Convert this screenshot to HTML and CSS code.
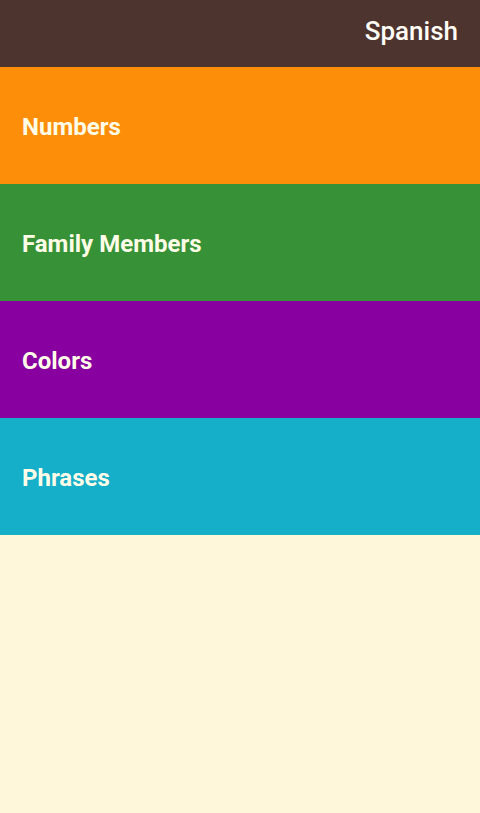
FILE: index.html
```html
<!DOCTYPE html>
<html lang="en">
<head>
  <meta charset="UTF-8">
  <meta name="viewport" content="width=device-width, initial-scale=1.0">
  <title>Miwok</title>
  <link rel="stylesheet" href="styles.css">
</head>
<body>
  <header class="app-bar">
    <h1>Spanish</h1>
  </header>

  <main class="categories">
    <div class="category numbers">Numbers</div>
    <div class="category family">Family Members</div>
    <div class="category colors">Colors</div>
    <div class="category phrases">Phrases</div>
  </main>
</body>
</html>
```

FILE: styles.css
```css
html, body {
  height: 100%;
}
body {
  margin: 0;
  font-family: Roboto, "Noto Sans", sans-serif;
  background-color: #fff7da;
  color: white;
}

.app-bar {
  height: 67px;
  background-color: #4e342e;
  display: flex;
  align-items: center;
  justify-content: flex-end;
  padding: 0 22px 6px;
  box-sizing: border-box;
}
.app-bar h1 {
  margin: 0;
  font-size: 26px;
  font-weight: 500;
  color: #fffdf5;
}

.categories {
  display: flex;
  flex-direction: column;
}

.category {
  height: 117px;
  box-sizing: border-box;
  display: flex;
  align-items: center;
  padding: 2px 0 0 22px;
  font-size: 24px;
  font-weight: bold;
  color: #fffde8;
}

.numbers {
  background-color: #fd8e09;
}
.family {
  background-color: #379237;
}
.colors {
  background-color: #8800a0;
}
.phrases {
  background-color: #16afca;
}
```
